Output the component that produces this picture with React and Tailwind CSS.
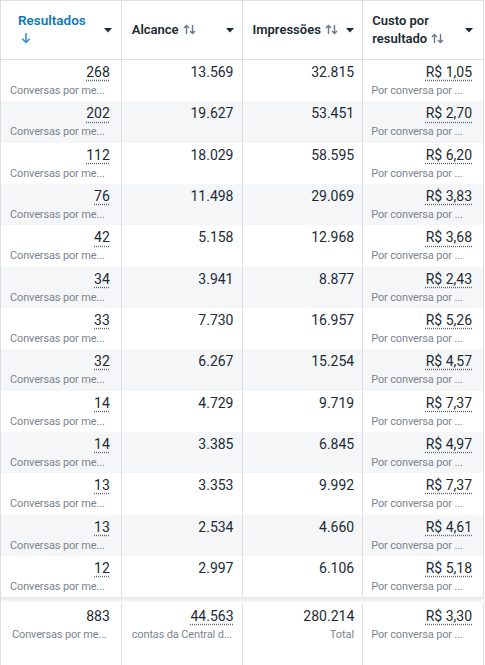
import React from "react";

const rows = [
  ["268", "13.569", "32.815", "R$ 1,05"],
  ["202", "19.627", "53.451", "R$ 2,70"],
  ["112", "18.029", "58.595", "R$ 6,20"],
  ["76", "11.498", "29.069", "R$ 3,83"],
  ["42", "5.158", "12.968", "R$ 3,68"],
  ["34", "3.941", "8.877", "R$ 2,43"],
  ["33", "7.730", "16.957", "R$ 5,26"],
  ["32", "6.267", "15.254", "R$ 4,57"],
  ["14", "4.729", "9.719", "R$ 7,37"],
  ["14", "3.385", "6.845", "R$ 4,97"],
  ["13", "3.353", "9.992", "R$ 7,37"],
  ["13", "2.534", "4.660", "R$ 4,61"],
  ["12", "2.997", "6.106", "R$ 5,18"],
];

function SortIcon() {
  return (
    <svg width="13" height="11" viewBox="0 0 13 11" className="inline-block ml-[4px] -mt-[1px]">
      <path d="M3.5 10V1.5M1 4l2.5-2.5L6 4" stroke="#67788a" strokeWidth="1.4" fill="none" />
      <path d="M9.5 1v8.5M7 7l2.5 2.5L12 7" stroke="#67788a" strokeWidth="1.4" fill="none" />
    </svg>
  );
}

function Caret() {
  return (
    <svg width="8" height="5" viewBox="0 0 8 5" className="shrink-0">
      <path d="M0 0h8L4 4.5z" fill="#1c2b33" />
    </svg>
  );
}

function Dotted({ children }) {
  return (
    <span className="underline decoration-dotted decoration-[#5d6670] underline-offset-[3px]">{children}</span>
  );
}

const sub = "text-[11px] tracking-[-0.15px] text-[#7b8590] mt-[1px] whitespace-nowrap";

export default function App() {
  return (
    <div className="w-[485px] h-[665px] overflow-hidden bg-white text-[#1c2b33]" style={{ fontFamily: "Roboto, 'Noto Sans', sans-serif" }}>
      <div className="w-[484px] border-l border-t border-[#dcdfe3]">
        {/* header */}
        <div className="flex h-[59px] border-b border-[#dcdfe3] text-[13px] font-semibold">
          <div className="w-[121px] border-r border-[#dcdfe3] flex items-center pl-[17px] pr-[9px] justify-between">
            <div className="self-start pt-[10px] flex flex-col text-[#0a78be] text-[13.5px] leading-[18px]">
              <span>Resultados</span>
              <svg width="10" height="12" viewBox="0 0 10 12" className="ml-[3px] mt-[3px]">
                <path d="M5 1v9.5M1.2 6.8L5 10.5l3.8-3.7" stroke="#3b8fd6" strokeWidth="1.6" fill="none" />
              </svg>
            </div>
            <Caret />
          </div>
          <div className="w-[121px] border-r border-[#dcdfe3] flex items-center pl-[10px] pr-[8px] justify-between">
            <span className="flex items-center">Alcance<SortIcon /></span>
            <Caret />
          </div>
          <div className="w-[121px] border-r border-[#dcdfe3] flex items-center pl-[10px] pr-[8px] justify-between">
            <span className="flex items-center">Impressões<SortIcon /></span>
            <Caret />
          </div>
          <div className="w-[121px] border-r border-[#dcdfe3] flex items-center pl-[9px] pr-[10px] justify-between">
            <div className="flex flex-col leading-[18px]">
              <span>Custo por</span>
              <span className="flex items-center">resultado<SortIcon /></span>
            </div>
            <Caret />
          </div>
        </div>
        {/* rows */}
        {rows.map((r, i) => (
          <div key={i} className={`flex h-[41.33px] ${i % 2 === 1 ? "bg-[#f5f6f7]" : "bg-white"}`}>
            <div className="w-[121px] border-r border-[#dcdfe3] pt-[4px] pl-[9px] pr-[11px] leading-[17px]">
              <div className="text-right text-[14px]"><Dotted>{r[0]}</Dotted></div>
              <div className={sub}>Conversas por me...</div>
            </div>
            <div className="w-[121px] border-r border-[#dcdfe3] pt-[4px] pr-[8px] leading-[17px]">
              <div className="text-right text-[14px]">{r[1]}</div>
            </div>
            <div className="w-[121px] border-r border-[#dcdfe3] pt-[4px] pr-[8px] leading-[17px]">
              <div className="text-right text-[14px]">{r[2]}</div>
            </div>
            <div className="w-[121px] border-r border-[#dcdfe3] pt-[4px] pl-[8px] pr-[11px] leading-[17px]">
              <div className="text-right text-[14px]"><Dotted>{r[3]}</Dotted></div>
              <div className={sub}>Por conversa por ...</div>
            </div>
          </div>
        ))}
        {/* footer */}
        <div className="relative flex h-[70px] bg-white">
          <div className="absolute left-0 right-0 top-0 h-[6px] bg-gradient-to-b from-[#e4e6e9] to-white" />
          <div className="w-[121px] border-r border-[#dcdfe3] pt-[11px] pl-[11px] pr-[11px] leading-[17px]">
            <div className="text-right text-[14px]">883</div>
            <div className={sub}>Conversas por me...</div>
          </div>
          <div className="w-[121px] border-r border-[#dcdfe3] pt-[11px] pl-[10px] pr-[8px] leading-[17px]">
            <div className="text-right text-[14px]"><Dotted>44.563</Dotted></div>
            <div className={sub}>contas da Central d...</div>
          </div>
          <div className="w-[121px] border-r border-[#dcdfe3] pt-[11px] pr-[8px] leading-[17px]">
            <div className="text-right text-[14px]">280.214</div>
            <div className="text-right text-[11px] text-[#7b8590] mt-[1px]">Total</div>
          </div>
          <div className="w-[121px] border-r border-[#dcdfe3] pt-[11px] pl-[8px] pr-[11px] leading-[17px]">
            <div className="text-right text-[14px]"><Dotted>R$ 3,30</Dotted></div>
            <div className={sub}>Por conversa por ...</div>
          </div>
        </div>
      </div>
    </div>
  );
}
